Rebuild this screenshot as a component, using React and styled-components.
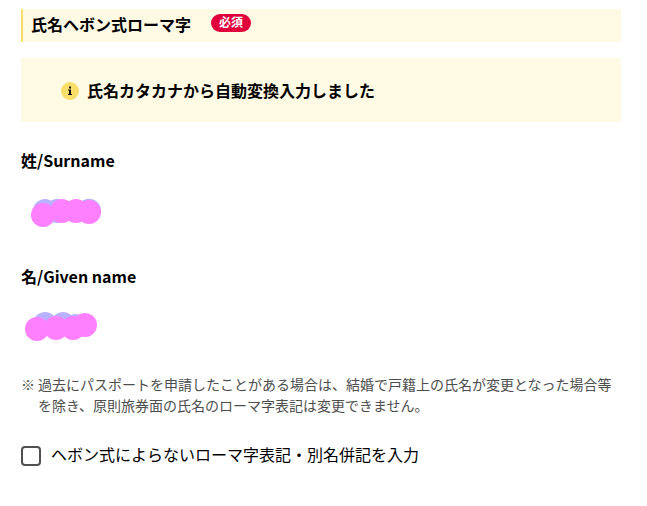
import styled, { createGlobalStyle } from 'styled-components'

const GlobalStyle = createGlobalStyle`
    * {
        box-sizing: border-box;
    }

    body {
        margin: 0;
        background: #fff;
        color: #000;
        font-family: 'Noto Sans CJK JP', 'Noto Sans', sans-serif;
        font-size: 16px;
    }
`

const Page = styled.main`
    width: 600px;
    margin: 9px 0 0 21px;
`

const Heading = styled.header`
    display: flex;
    align-items: flex-start;
    gap: 20px;
    height: 33px;
    padding-left: 8px;
    border-left: 2px solid #fade6a;
    background: #fffae3;

    h2 {
        margin: 0;
        font-size: 16px;
        font-weight: 700;
        line-height: 30px;
    }
`

const Badge = styled.span`
    height: 18px;
    margin-top: 5px;
    padding: 0 8px;
    border-radius: 9px;
    background: #e0003c;
    color: #fff;
    font-size: 12px;
    font-weight: 700;
    line-height: 16px;
`

const Notice = styled.div`
    display: flex;
    align-items: center;
    gap: 8px;
    height: 64px;
    margin-top: 16px;
    padding: 2px 40px 0;
    background: #fffae3;

    p {
        margin: 0;
        padding-bottom: 2px;
        font-weight: 700;
        line-height: 24px;
    }
`

const Field = styled.section`
    height: 116px;

    h3 {
        margin: 0 0 25px;
        font-size: 16px;
        font-weight: 700;
        line-height: 24px;
    }

    svg {
        display: block;
        overflow: visible;
    }
`

const Fields = styled.div`
    margin-top: 26px;
`

const Note = styled.div`
    display: flex;
    gap: 3px;
    margin-top: -6px;
    color: #4d4d4d;
    font-size: 14px;
    line-height: 21px;

    p {
        margin: 0;
        white-space: nowrap;
    }
`

const CheckLabel = styled.label`
    display: flex;
    align-items: center;
    gap: 10px;
    height: 24px;
    margin-top: 26px;
    line-height: 24px;
`

const Checkbox = styled.input.attrs({ type: 'checkbox' })`
    appearance: none;
    width: 20px;
    height: 20px;
    margin: 4px 0 0;
    border: 2px solid #505050;
    border-radius: 4px;
    background: #fff;

    &:checked {
        background: #fade6a;
    }
`

const InfoIcon = () => (
    <svg width="18" height="18" viewBox="0 0 18 18">
        <circle cx="9" cy="9" r="9" fill="#fade6a" />
        <path d="M8 4.5h2v2H8zM7 7.5h3v4.5h1v1H7v-1h1V8.5H7z" fill="#111" />
    </svg>
)

// Each dot is [cx, cy], relative to the left edge of the field
const surnameMask = {
    back: [[24, 14], [36, 14], [68, 13.7]],
    front: [[22, 18], [41, 14], [55, 14], [68, 15]],
}

const givenNameMask = {
    back: [[24, 11], [42, 11], [55, 13]],
    front: [[16, 16], [35, 15], [52, 15], [64, 12]],
}

const Mask = ({ back, front }) => (
    <svg width="100" height="36" viewBox="0 0 100 36">
        {back.map(([x, y]) => (
            <circle key={`${x}-${y}`} cx={x} cy={y} r="12" fill="#b8b1ff" />
        ))}
        {front.map(([x, y]) => (
            <circle key={`${x}-${y}`} cx={x} cy={y} r="12" fill="#ff80ff" />
        ))}
    </svg>
)

export default function App() {
    return (
        <>
            <GlobalStyle />
            <Page>
                <Heading>
                    <h2>氏名ヘボン式ローマ字</h2>
                    <Badge>必須</Badge>
                </Heading>
                <Notice>
                    <InfoIcon />
                    <p>氏名カタカナから自動変換入力しました</p>
                </Notice>
                <Fields>
                    <Field>
                        <h3>姓/Surname</h3>
                        <Mask {...surnameMask} />
                    </Field>
                    <Field>
                        <h3>名/Given name</h3>
                        <Mask {...givenNameMask} />
                    </Field>
                </Fields>
                <Note>
                    <span>※</span>
                    <p>
                        過去にパスポートを申請したことがある場合は、結婚で戸籍上の氏名が変更となった場合等
                        <br />
                        を除き、原則旅券面の氏名のローマ字表記は変更できません。
                    </p>
                </Note>
                <CheckLabel>
                    <Checkbox />
                    ヘボン式によらないローマ字表記・別名併記を入力
                </CheckLabel>
            </Page>
        </>
    )
}
